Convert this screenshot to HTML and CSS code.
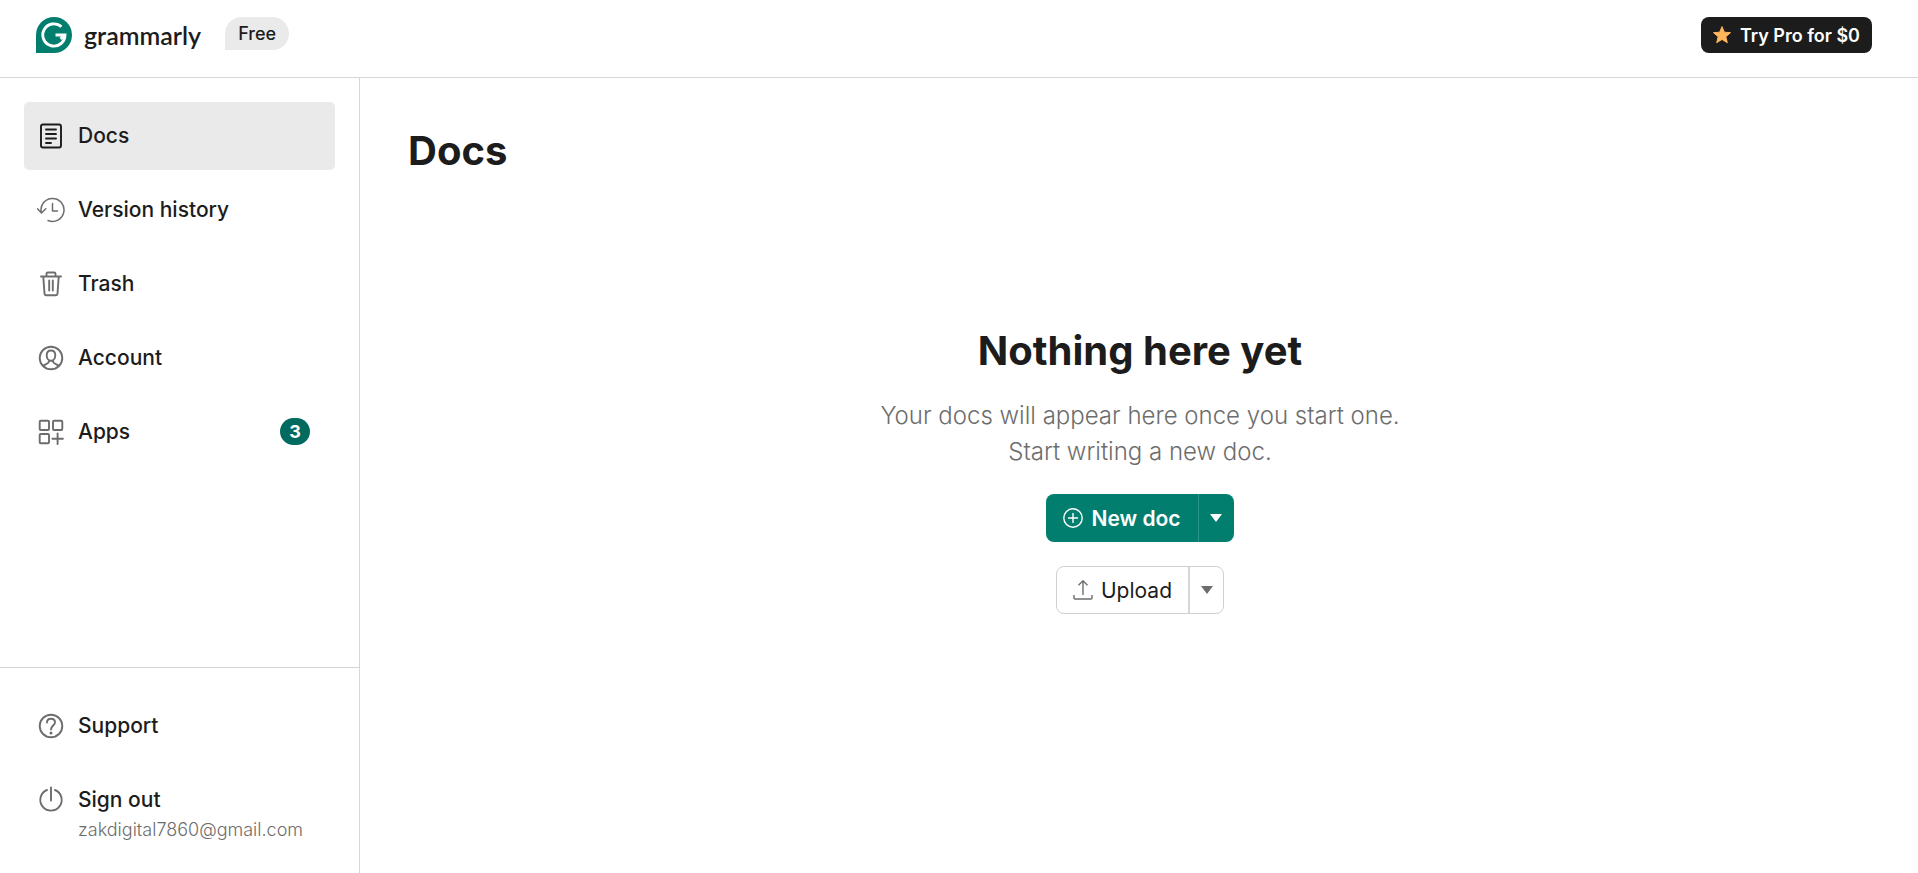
FILE: index.html
```html
<!DOCTYPE html>
<html lang="en">
<head>
<meta charset="utf-8">
<title>Grammarly</title>
<link rel="stylesheet" href="styles.css">
</head>
<body>
<div class="app">
  <header class="header">
    <a class="brand" href="#">
      <svg class="brand-mark" viewBox="0 0 36 36" aria-hidden="true">
        <path d="M0 36V18A18 18 0 1 1 18 36Z" fill="#027e6f"/>
        <path d="M25.4 9.800A11.100 11.100 0 1 0 29 18H19.500M24.500 21.800L28.800 18" fill="none" stroke="#fff" stroke-width="2.900"/>
      </svg>
      <span class="brand-name">grammarly</span>
    </a>
    <span class="plan">Free</span>
    <button class="pro" type="button">
      <svg class="pro-star" viewBox="0 0 20 20" aria-hidden="true"><path d="M10 1.600l2.300 5.600 6.200.5-4.700 4 1.500 6-5.300-3.300-5.300 3.300 1.500-6-4.700-4 6.200-.5z" fill="#ffb65c" stroke="#ffb65c" stroke-linejoin="round"/></svg>
      <span>Try Pro for $0</span>
    </button>
  </header>

  <div class="body">
    <aside class="sidebar">
      <nav class="nav" aria-label="Main">
        <a class="item item-active" href="#" aria-current="page">
          <svg class="icon" viewBox="0 0 28 28" aria-hidden="true"><rect x="4" y="2.500" width="20" height="23" rx="2"/><path d="M9 7.500h10M9 12h10M9 16.500h10M9 21h5"/></svg>
          <span>Docs</span>
        </a>
        <a class="item" href="#">
          <svg class="icon icon-thin" viewBox="0 0 28 28" aria-hidden="true"><path d="M4.300 16.500A11.500 11.500 0 1 1 11 24.500M.5 12.700l4 4.300 4.300-4.300M15.500 7.500v7.500h5"/></svg>
          <span>Version history</span>
        </a>
        <a class="item" href="#">
          <svg class="icon" viewBox="0 0 28 28" aria-hidden="true"><path d="M4 6.500h20M9.500 6V3.700c0-.8.5-1.200 1.200-1.200h6.600c.7 0 1.200.4 1.200 1.200V6M6.300 7l1.200 16.500c.1 1.200.7 1.800 1.800 1.800h9.400c1.100 0 1.700-.6 1.800-1.800L21.700 7M12.200 10.500v10M15.800 10.500v10"/></svg>
          <span>Trash</span>
        </a>
        <a class="item" href="#">
          <svg class="icon" viewBox="0 0 28 28" aria-hidden="true"><circle cx="14" cy="14" r="11.300"/><path d="M14 6.500c-2.600 0-4.300 1.900-4.300 4.700 0 3.100 1.900 5.600 4.300 5.600s4.300-2.500 4.300-5.600c0-2.800-1.700-4.700-4.300-4.700zM12.200 16.500c-.2 2.200-1 2.800-3 3.600-1 .4-1.900.8-2.700 1.600M15.800 16.500c.2 2.200 1 2.800 3 3.600 1 .4 1.900.8 2.700 1.600"/></svg>
          <span>Account</span>
        </a>
        <a class="item" href="#">
          <svg class="icon" viewBox="0 0 28 28" aria-hidden="true"><rect x="2.700" y="2.700" width="9.300" height="9.300" rx="1"/><rect x="16" y="2.700" width="9.300" height="9.300" rx="1"/><rect x="2.700" y="16" width="9.300" height="9.300" rx="1"/><path d="M20.600 15.500v10.500M15.400 20.700h10.500"/></svg>
          <span>Apps</span>
          <span class="badge">3</span>
        </a>
      </nav>
      <div class="nav nav-footer">
        <a class="item" href="#">
          <svg class="icon" viewBox="0 0 28 28" aria-hidden="true"><circle cx="14" cy="14" r="11.300"/><path d="M10 10.500c0-2.300 1.700-3.800 4-3.800s4 1.500 4 3.600c0 3.200-4 3.400-4 7.200"/><circle class="dot" cx="14" cy="21" r="1.500"/></svg>
          <span>Support</span>
        </a>
        <a class="item item-account" href="#">
          <svg class="icon" viewBox="0 0 28 28" aria-hidden="true"><path d="M10 4A10.700 10.700 0 1 0 18 4M14 1.500v13"/></svg>
          <span>Sign out</span>
          <span class="email">zakdigital7860@gmail.com</span>
        </a>
      </div>
    </aside>

    <main class="main">
      <h1 class="title">Docs</h1>
      <section class="empty">
        <h2 class="title">Nothing here yet</h2>
        <p class="hint">Your docs will appear here once you start one.<br>Start writing a new doc.</p>
        <div class="split split-primary">
          <button class="split-action" type="button">
            <svg class="split-icon" viewBox="0 0 20 20" aria-hidden="true"><circle cx="10" cy="10" r="9.200"/><path d="M10 5v10M5 10h10"/></svg>
            <span>New doc</span>
          </button>
          <button class="split-toggle" type="button" aria-label="More new doc options"><svg class="caret" viewBox="0 0 12 8" aria-hidden="true"><path d="M0 0h12L6 8z"/></svg></button>
        </div>
        <div class="split split-outline">
          <button class="split-action" type="button">
            <svg class="split-icon" viewBox="0 0 20 20" aria-hidden="true"><path d="M1 15v3c0 .7.300 1 1 1h16c.7 0 1-.3 1-1v-3M10 15V1M5.500 5.300L10 .8l4.500 4.500"/></svg>
            <span>Upload</span>
          </button>
          <button class="split-toggle" type="button" aria-label="More upload options"><svg class="caret" viewBox="0 0 12 8" aria-hidden="true"><path d="M0 0h12L6 8z"/></svg></button>
        </div>
      </section>
    </main>
  </div>
</div>
</body>
</html>
```
FILE: styles.css
```css
* {
  box-sizing: border-box;
}

body {
  margin: 0;
  background: #fff;
  color: #1c1c1c;
  font-family: Inter, "Liberation Sans", sans-serif;
  font-size: 21px;
}

a {
  color: inherit;
  text-decoration: none;
}

button {
  border: 0;
  padding: 0;
  background: none;
  color: inherit;
  font: inherit;
  cursor: pointer;
}

.app {
  display: flex;
  flex-direction: column;
  min-height: 100vh;
}

.header {
  display: flex;
  align-items: flex-start;
  padding: 17px 46px 24px 36px;
  border-bottom: 1px solid #d6d6d6;
}

.brand {
  display: flex;
  align-items: center;
  gap: 12px;
}

.brand-mark {
  width: 36px;
  height: 36px;
}

.brand-name {
  font-family: Lato, sans-serif;
  font-size: 25px;
  font-weight: 600;
  line-height: 34px;
}

.plan {
  margin-left: 24px;
  padding: 0 13px;
  border-radius: 17px 17px 17px 0;
  background: #eaeaea;
  font-size: 18px;
  font-weight: 500;
  line-height: 33px;
}

.pro {
  display: flex;
  align-items: center;
  gap: 8px;
  height: 36px;
  margin-left: auto;
  padding: 0 12px 0 11px;
  border-radius: 8px;
  background: #1c1c1c;
  color: #fff;
  font-size: 18px;
  font-weight: 600;
}

.pro-star {
  width: 20px;
  height: 20px;
}

.body {
  display: flex;
  flex: 1;
}

.sidebar {
  display: flex;
  flex: 0 0 360px;
  flex-direction: column;
  justify-content: space-between;
  border-right: 1px solid #d6d6d6;
}

.nav {
  display: flex;
  flex-direction: column;
  gap: 6px;
  padding: 24px;
}

.nav-footer {
  border-top: 1px solid #d6d6d6;
}

.item {
  display: grid;
  grid-template-columns: 28px 1fr auto;
  align-items: center;
  column-gap: 13px;
  padding: 20px 25px 20px 13px;
  border-radius: 5px;
  font-weight: 500;
  line-height: 28px;
}

.item-active {
  background: #eaeaea;
}

.item-account {
  padding-bottom: 7px;
}

.email {
  grid-column: 2 / 4;
  padding-top: 4px;
  color: #6d6d6d;
  font-size: 18px;
  font-weight: 300;
  line-height: 24px;
}

.icon {
  width: 28px;
  height: 28px;
  fill: none;
  stroke: #6d6d6d;
  stroke-width: 1.900;
  stroke-linecap: round;
  stroke-linejoin: round;
}

.icon-thin {
  stroke-width: 1.500;
}

.icon .dot {
  fill: #6d6d6d;
  stroke: none;
}

.item-active .icon {
  stroke: #1c1c1c;
}

.badge {
  align-self: start;
  width: 30px;
  border-radius: 14px;
  background: #026a5e;
  color: #fff;
  font-size: 18px;
  font-weight: 700;
  line-height: 27px;
  text-align: center;
}

.main {
  flex: 1;
  padding: 48px 46px 48px 48px;
}

.title {
  margin: 0;
  font-size: 40px;
  font-weight: 700;
  line-height: 50px;
}

.empty {
  display: flex;
  flex-direction: column;
  align-items: center;
  gap: 24px;
  padding-top: 150px;
}

.hint {
  margin: -2px 0 0;
  color: #6d6d6d;
  font-size: 24px;
  font-weight: 300;
  line-height: 36px;
  text-align: center;
}

.split {
  display: flex;
  height: 48px;
  border-radius: 8px;
}

.split-action {
  display: flex;
  align-items: center;
  gap: 8px;
  padding: 0 17px;
}

.split-icon {
  width: 20px;
  height: 20px;
  fill: none;
  stroke: currentColor;
  stroke-width: 1.400;
}

.split-toggle {
  display: flex;
  align-items: center;
  justify-content: center;
  width: 36px;
}

.caret {
  width: 12px;
  height: 8px;
  fill: currentColor;
}

.split-primary {
  background: #027e6f;
  color: #fff;
  font-weight: 600;
}

.split-primary .split-toggle {
  border-left: 1px solid #2a9487;
}

.split-outline {
  border: 1px solid #d0d0d0;
}

.split-outline .split-action {
  padding: 0 16px;
}

.split-outline .split-icon,
.split-outline .caret {
  color: #6d6d6d;
}

.split-outline .split-toggle {
  width: 35px;
  border-left: 2px solid #d6d6d6;
}
```
